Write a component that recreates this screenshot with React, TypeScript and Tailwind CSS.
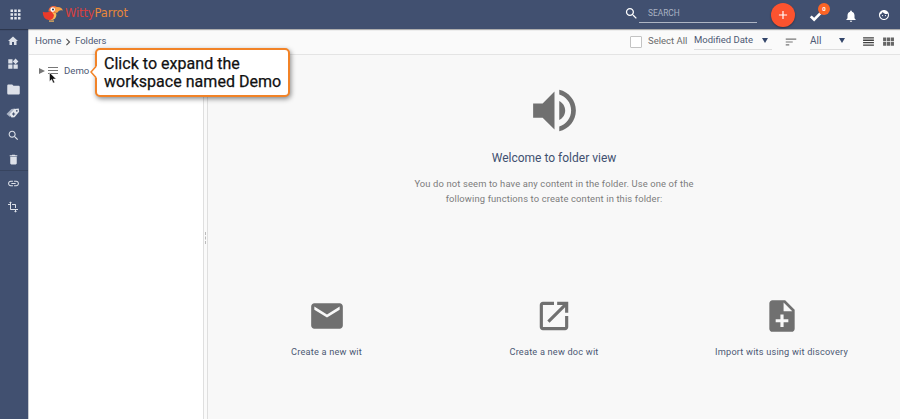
import React from "react";

const P = {
  apps: "M4 8h4V4H4v4zm6 12h4v-4h-4v4zm-6 0h4v-4H4v4zm0-6h4v-4H4v4zm6 0h4v-4h-4v4zm6-10v4h4V4h-4zm-6 4h4V4h-4v4zm6 6h4v-4h-4v4zm0 6h4v-4h-4v4z",
  home: "M10 20v-6h4v6h5v-8h3L12 3 2 12h3v8z",
  widgets: "M2.500 2.500h8.500v8.500H2.500zM13 13h8.500v8.500H13zM2.500 13H11v8.500H2.500zM17.200 1.200 22.800 6.800 17.200 12.400 11.600 6.800z",
  folder: "M10 4H4c-1.1 0-1.99.9-1.99 2L2 18c0 1.1.9 2 2 2h16c1.1 0 2-.9 2-2V8c0-1.1-.9-2-2-2h-8l-2-2z",
  search: "M15.5 14h-.79l-.28-.27C15.41 12.59 16 11.11 16 9.5 16 5.91 13.09 3 9.5 3S3 5.91 3 9.5 5.91 16 9.5 16c1.61 0 3.09-.59 4.23-1.57l.27.28v.79l5 4.99L20.49 19l-4.99-5zm-6 0C7.01 14 5 11.99 5 9.5S7.01 5 9.5 5 14 7.01 14 9.5 11.99 14 9.5 14z",
  trash: "M6 19c0 1.1.9 2 2 2h8c1.1 0 2-.9 2-2V7H6v12zM19 4h-3.5l-1-1h-5l-1 1H5v2h14V4z",
  link: "M3.9 12c0-1.71 1.39-3.1 3.1-3.1h4V7H7c-2.76 0-5 2.24-5 5s2.24 5 5 5h4v-1.9H7c-1.71 0-3.1-1.39-3.1-3.1zM8 13h8v-2H8v2zm9-6h-4v1.9h4c1.71 0 3.1 1.39 3.1 3.1s-1.39 3.1-3.1 3.1h-4V17h4c2.76 0 5-2.24 5-5s-2.24-5-5-5z",
  crop: "M22 18v-2H8V4h2L7 1 4 4h2v2H2v2h4v8c0 1.1.9 2 2 2h8v2h-2l3 3 3-3h-2v-2h4zM10 8h6v6h2V8c0-1.1-.9-2-2-2h-6v2z",
  plus: "M19 13h-6v6h-2v-6H5v-2h6V5h2v6h6v2z",
  check: "M1.500 13.500 5 10l4.500 4.500L19.500 4 23 7.500 9.500 21z",
  bell: "M12 22c1.1 0 2-.9 2-2h-4c0 1.1.89 2 2 2zm6-6v-5c0-3.07-1.64-5.64-4.5-6.32V4c0-.83-.67-1.5-1.5-1.5s-1.5.67-1.5 1.5v.68C7.63 5.36 6 7.92 6 11v5l-2 2v1h16v-1l-2-2z",
  face: "M9 11.75c-.69 0-1.25.56-1.25 1.25s.56 1.25 1.25 1.25 1.25-.56 1.25-1.25-.56-1.25-1.25-1.25zm6 0c-.69 0-1.25.56-1.25 1.25s.56 1.25 1.25 1.25 1.25-.56 1.25-1.25-.56-1.25-1.25-1.25zM12 2C6.48 2 2 6.48 2 12s4.48 10 10 10 10-4.48 10-10S17.52 2 12 2zm0 18c-4.41 0-8-3.59-8-8 0-.29.02-.58.05-.86 2.36-1.05 4.23-2.98 5.21-5.37C11.07 8.33 14.05 10 17.42 10c.78 0 1.53-.09 2.25-.26.21.71.33 1.47.33 2.26 0 4.41-3.59 8-8 8z",
  chevron: "M10 6 8.59 7.41 13.17 12l-4.58 4.59L10 18l6-6z",
  sort: "M3 18h6v-2H3v2zM3 6v2h18V6H3zm0 7h12v-2H3v2z",
  rows: "M2 4h20v2.400H2zM2 8.500h20v2.400H2zM2 13h20v2.400H2zM2 17.500h20v2.400H2z",
  grid: "M2 4.500h5.900v7H2zM9.100 4.500H15v7H9.100zM16.200 4.500h5.900v7h-5.900zM2 12.700h5.900v7H2zM9.100 12.700H15v7H9.100zM16.200 12.700h5.900v7h-5.900z",
  volume: "M3 9v6h4l5 5V4L7 9H3zm13.5 3c0-1.77-1.02-3.29-2.5-4.03v8.05c1.48-.73 2.5-2.25 2.5-4.02zM14 3.23v2.06c2.89.86 5 3.54 5 6.71s-2.11 5.85-5 6.71v2.06c4.01-.91 7-4.49 7-8.77s-2.99-7.86-7-8.77z",
  mail: "M20 4H4c-1.1 0-1.99.9-1.99 2L2 18c0 1.1.9 2 2 2h16c1.1 0 2-.9 2-2V6c0-1.1-.9-2-2-2zm0 4-8 5-8-5V6l8 5 8-5v2z",
  open: "M19 19H5V5h7V3H5c-1.11 0-2 .9-2 2v14c0 1.1.89 2 2 2h14c1.1 0 2-.9 2-2v-7h-2v7zM14 3v2h3.59l-9.83 9.83 1.41 1.41L19 6.41V10h2V3h-7z",
  noteAdd: "M14 2H6c-1.1 0-1.99.9-1.99 2L4 20c0 1.1.89 2 1.99 2H18c1.1 0 2-.9 2-2V8l-6-6zm2 14h-3v3h-2v-3H8v-2h3v-3h2v3h3v2zm-3-7V3.5L18.5 9H13z",
};

function Icon({ d, size, className = "" }: { d: string; size: number; className?: string }) {
  return (
    <svg width={size} height={size} viewBox="0 0 24 24" fill="currentColor" className={`shrink-0 ${className}`}>
      <path d={d} />
    </svg>
  );
}

function Tags() {
  return (
    <svg width="14" height="12" viewBox="0 0 14 12" className="shrink-0">
      <path d="M.5 7 5.500 2 9 1.500 4 10z" fill="#a9b2c4" />
      <path d="M3.500 7.200 8.200 2 12.800 1.500l.3 3.300L8.500 10.200 5.500 10.500z" fill="#e3e6ec" />
      <circle cx="10.800" cy="3.800" r=".9" fill="#415070" />
      <path d="M6 7h3.200M7.600 5.400v3.200" stroke="#415070" strokeWidth="1" />
    </svg>
  );
}

function Bird() {
  return (
    <svg width="22" height="19" viewBox="0 0 22 19" className="shrink-0">
      <path d="M6 14.500C9 16 14.800 15 14.300 9L12 5 8 7z" fill="#f9b95a" />
      <path d="M.8 6.700C3.500 7.600 6 7.500 9.500 6.500L12 10c-.2 3.800-3 5.600-6 4.800C3 14.200.8 11.500.8 6.700z" fill="#ea3a2a" />
      <path d="M6.500 6.500C6.500 3 9 .8 12 1c2.200.1 3.500 1.200 3.800 2.800L13 8c-1.500-1-3.800-1.600-6.500-1.500z" fill="#f4693a" />
      <path d="M12.500 2.500c4-1.200 7.800-.3 8.300 3.200-2.300-.8-3.800-.4-5.300 1.900-2 .8-3.500-.3-3-5.100z" fill="#f7a045" />
      <circle cx="10.700" cy="4.600" r="2.300" fill="#fff" />
      <circle cx="11" cy="4.500" r="1" fill="#27324b" />
      <path d="M7 15.500h5v1.200H7z" fill="#f9b95a" />
    </svg>
  );
}

function Header() {
  return (
    <header className="relative z-10 flex h-[29px] shrink-0 items-center bg-[#415070] text-white shadow-[0_1px_1px_rgba(0,0,0,0.3)]">
      <Icon d={P.apps} size={15} className="ml-2 -mt-px text-[#e4e7ed]" />
      <div className="ml-[19px] flex items-center">
        <Bird />
        <span className="-mt-[2px] ml-px whitespace-nowrap font-['DejaVu_Sans',sans-serif] text-[11.5px] leading-none tracking-[-0.12px]">
          <span className="text-[#d8403e]">Witty</span>
          <span className="text-[#e9873a]">Parrot</span>
        </span>
      </div>
      <div className="ml-auto flex items-center">
        <Icon d={P.search} size={15} className="-mt-[3px]" />
        <div className="-mt-px h-[18px] w-[118px] border-b border-[#aeb5c4] pl-[9px] pt-px text-[8.4px] leading-[15px] text-[#a9b2c3]">SEARCH</div>
        <button className="ml-3.5 flex size-6 items-center justify-center rounded-full bg-[#fc532f] shadow-[0_1px_2px_rgba(0,0,0,0.35)]">
          <Icon d={P.plus} size={14} />
        </button>
        <div className="relative ml-3.5 mt-[3px] flex w-3.5">
          <Icon d={P.check} size={13} />
          <span className="absolute left-[9px] top-[-7px] flex size-3 items-center justify-center rounded-full bg-[#fb6425] text-[6px] font-bold leading-none">0</span>
        </div>
        <Icon d={P.bell} size={14} className="ml-[21px] mt-[3px]" />
        <Icon d={P.face} size={12} className="ml-5 mr-[10px] mt-px" />
      </div>
    </header>
  );
}

function Sidebar() {
  return (
    <nav className="flex w-[28px] shrink-0 flex-col items-center bg-[#415070] pr-[2px] text-[#dde1e9]">
      <div className="flex h-[23px] items-center"><Icon d={P.home} size={12} /></div>
      <div className="flex h-6 items-center"><Icon d={P.widgets} size={12} /></div>
      <div className="flex h-[25px] items-center pt-px"><Icon d={P.folder} size={15} /></div>
      <div className="flex h-[23px] items-center pt-px"><Tags /></div>
      <div className="flex h-[22px] items-center"><Icon d={P.search} size={13} /></div>
      <div className="-mr-[2px] flex h-[25px] w-[28px] items-center justify-center border-b border-[#37445f] pr-[2px] pt-[2px]"><Icon d={P.trash} size={13} /></div>
      <div className="flex h-6 items-center"><Icon d={P.link} size={13} /></div>
      <div className="flex h-[23px] items-center"><Icon d={P.crop} size={12} /></div>
    </nav>
  );
}

function Caret() {
  return <span className="mt-px h-0 w-0 border-x-[3.5px] border-t-[5px] border-x-transparent border-t-[#34466b]" />;
}

function Toolbar() {
  return (
    <div className="flex h-[26px] shrink-0 items-center border-b border-[#e4e4e4] bg-[#fafafa] text-[10px] text-[#4d5974]">
      <span className="ml-[6px] w-[26px] whitespace-nowrap text-[9.8px]">Home</span>
      <Icon d={P.chevron} size={14} className="text-[#555]" />
      <span className="text-[9.5px]">Folders</span>
      <div className="ml-auto flex h-full items-center">
        <span className="ml-px size-3 rounded-[1px] border border-[#c3c3c3] bg-white" />
        <span className="ml-[6px] w-10 whitespace-nowrap text-[9.5px] text-[#6a6a6a]">Select All</span>
        <div className="ml-[6px] flex h-4 w-[78px] items-center justify-between border-b border-[#dedede] pb-[2px] pr-1 text-[9.5px]">
          <span>Modified Date</span><Caret />
        </div>
        <Icon d={P.sort} size={14} className="ml-[12px] mt-px text-[#777]" />
        <div className="ml-3 flex h-4 w-[40px] items-center justify-between border-b border-[#dedede] pb-[2px] pr-[5px]">
          <span>All</span><Caret />
        </div>
        <Icon d={P.rows} size={13} className="ml-[12px] text-[#424242]" />
        <Icon d={P.grid} size={13} className="ml-[7px] mr-[5px] text-[#666]" />
      </div>
    </div>
  );
}

function Callout() {
  return (
    <div className="absolute left-[66px] top-[-7px] z-20 h-[49px] w-[195px] rounded-[5px] border-2 border-[#f28327] bg-white pl-[7px] pt-[5px] text-[16px] leading-[18px] text-[#111] shadow-[1px_2px_5px_rgba(0,0,0,0.45)]">
      <svg width="7" height="12" viewBox="0 0 7 12" className="absolute left-[-7px] top-[16px]">
        <path d="M7 0 1 6l6 6z" fill="#fff" />
        <path d="M6 .5 1 6l5 5.500" fill="none" stroke="#f28327" strokeWidth="1.500" />
      </svg>
      <div className="whitespace-nowrap tracking-[0.03px] [-webkit-text-stroke:0.25px_#111]">Click to expand the<br />workspace named Demo</div>
    </div>
  );
}

function TreePanel() {
  return (
    <aside className="relative w-[174px] shrink-0 bg-white">
      <div className="flex h-8 items-center pl-[10px] text-[9.600px] text-[#4d5974]">
        <span className="h-0 w-0 border-y-[3.5px] border-l-[6px] border-y-transparent border-l-[#777]" />
        <div className="-mt-px ml-[3px] flex w-[10px] flex-col gap-[2px]">
          <span className="h-px bg-[#777]" /><span className="h-px bg-[#777]" /><span className="h-px bg-[#777]" />
        </div>
        <span className="ml-[6px]">Demo</span>
      </div>
      <svg width="8" height="12" viewBox="0 0 8 12" className="absolute left-[20px] top-[17px]">
        <path d="M.5.5v9l2.100-2 1.500 3.600 1.600-.7-1.500-3.400h3z" fill="#111" stroke="#fff" strokeWidth=".5" />
      </svg>
      <Callout />
    </aside>
  );
}

function Action({ d, label, width }: { d: string; label: string; width: string }) {
  return (
    <div className={`flex flex-col items-center ${width}`}>
      <Icon d={d} size={38} className="text-[#707070]" />
      <span className="mt-[10px] whitespace-nowrap text-[9.200px] leading-[14px] tracking-[0.2px] text-[#4d5974]">{label}</span>
    </div>
  );
}

export default function App() {
  return (
    <div className="flex h-[419px] w-[900px] flex-col overflow-hidden bg-[#f8f8f8] font-[Roboto,sans-serif]">
      <Header />
      <div className="flex min-h-0 flex-1">
        <Sidebar />
        <div className="flex min-w-0 flex-1 flex-col border-l border-[#c8cbd1]">
          <Toolbar />
          <div className="flex min-h-0 flex-1">
            <TreePanel />
            <div className="flex w-[5px] shrink-0 items-center justify-center border-x border-[#dfdfdf] bg-[#fafafa]">
              <span className="mb-[-1px] h-3 border-l border-dashed border-[#bbb]" />
            </div>
            <main className="flex flex-1 flex-col items-center pt-[27px]">
              <Icon d={P.volume} size={57} className="text-[#707070]" />
              <h1 className="mt-[11px] text-[12px] leading-4 text-[#415070]">Welcome to folder view</h1>
              <p className="mt-[11px] text-center text-[9.400px] leading-[14.500px] tracking-[0.14px] text-[#7c7c7c]">
                You do not seem to have any content in the folder. Use one of the<br />following functions to create content in this folder:
              </p>
              <div className="mt-[91px] flex">
                <Action d={P.mail} label="Create a new wit" width="w-[227px]" />
                <Action d={P.open} label="Create a new doc wit" width="w-[228px]" />
                <Action d={P.noteAdd} label="Import wits using wit discovery" width="w-[227px]" />
              </div>
            </main>
          </div>
        </div>
      </div>
    </div>
  );
}
